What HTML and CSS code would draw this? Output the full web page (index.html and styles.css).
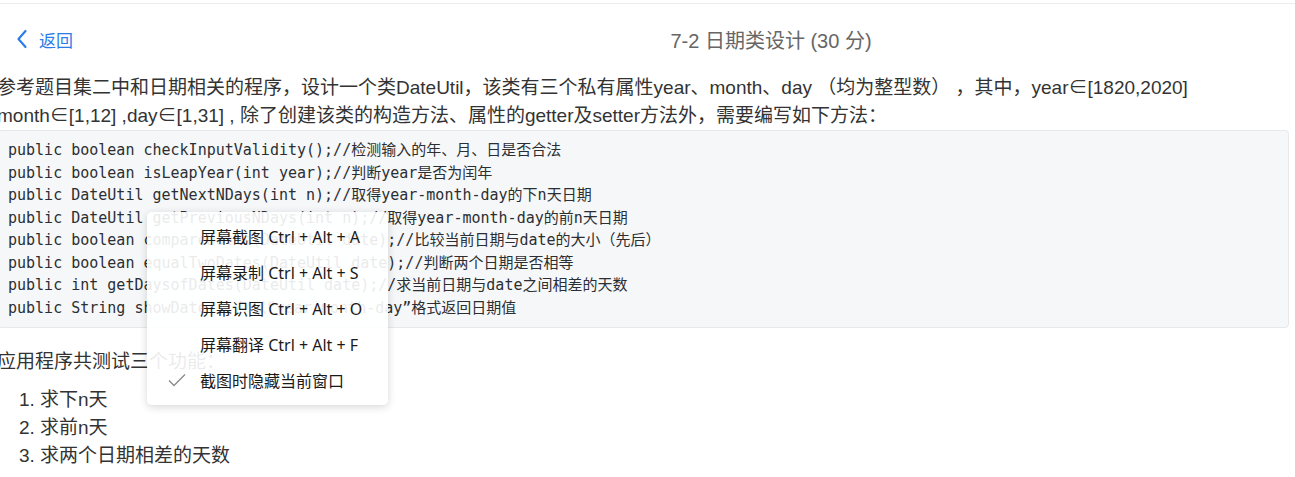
FILE: index.html
```html
<!DOCTYPE html>
<html lang="zh-CN">
<head>
<meta charset="utf-8">
<title>7-2 日期类设计</title>
<link rel="stylesheet" href="styles.css">
</head>
<body>
<div class="topline"></div>
<header class="bar">
  <a class="back" href="#">
    <svg class="chev" width="12" height="20" viewBox="0 0 12 20"><path d="M9.5 2 L2.5 10 L9.5 18" fill="none" stroke="currentColor" stroke-width="2.2" stroke-linecap="round" stroke-linejoin="round"/></svg>
    <span>返回</span>
  </a>
  <h1 class="title">7-2 日期类设计 (30 分)</h1>
</header>
<main class="content">
  <p class="desc"><span class="ln">参考题目集二中和日期相关的程序，设计一个类DateUtil，该类有三个私有属性year、month、day （均为整型数） ，其中，year∈[1820,2020]</span><br><span class="ln">month∈[1,12] ,day∈[1,31] , 除了创建该类的构造方法、属性的getter及setter方法外，需要编写如下方法：</span></p>
  <pre class="code">public boolean checkInputValidity();//检测输入的年、月、日是否合法
public boolean isLeapYear(int year);//判断year是否为闰年
public DateUtil getNextNDays(int n);//取得year-month-day的下n天日期
public DateUtil getPreviousNDays(int n);//取得year-month-day的前n天日期
public boolean compareDates(DateUtil date);//比较当前日期与date的大小（先后）
public boolean equalTwoDates(DateUtil date);//判断两个日期是否相等
public int getDaysofDates(DateUtil date);//求当前日期与date之间相差的天数
public String showDate();//以“year-month-day”格式返回日期值</pre>
  <p class="intro">应用程序共测试三个功能：</p>
  <ol class="list">
    <li>求下n天</li>
    <li>求前n天</li>
    <li>求两个日期相差的天数</li>
  </ol>
</main>
<div class="menu">
  <div class="item"><span class="ico"></span>屏幕截图 Ctrl + Alt + A</div>
  <div class="item"><span class="ico"></span>屏幕录制 Ctrl + Alt + S</div>
  <div class="item"><span class="ico"></span>屏幕识图 Ctrl + Alt + O</div>
  <div class="item"><span class="ico"></span>屏幕翻译 Ctrl + Alt + F</div>
  <div class="item"><span class="ico"><svg width="18" height="14" viewBox="0 0 18 14"><path d="M1 7.5 L6 12.5 L17 1.5" fill="none" stroke="#8a8a8a" stroke-width="1.3"/></svg></span>截图时隐藏当前窗口</div>
</div>
</body>
</html>
```
FILE: styles.css
```css
html, body {
  margin: 0;
  padding: 0;
  background: #fff;
  overflow: hidden;
}
body {
  width: 1295px;
  height: 477px;
  font-family: "Liberation Sans", "Noto Sans CJK SC", sans-serif;
  color: #333;
}
.topline {
  height: 3px;
  border-bottom: 1px solid #ececec;
}
.bar {
  display: flex;
  align-items: center;
  height: 70px;
}
.back {
  width: 247px;
  box-sizing: border-box;
  padding-left: 16px;
  display: flex;
  align-items: center;
  gap: 11px;
  color: #2b7ce9;
  text-decoration: none;
  font-size: 17px;
  font-family: "Noto Sans CJK SC", sans-serif;
}
.chev { display: block; }
.title {
  flex: 1;
  margin: 0;
  padding-top: 1px;
  text-align: center;
  font-weight: normal;
  font-size: 20px;
  color: #666;
  font-family: "Liberation Sans", "Noto Sans CJK SC", sans-serif;
}
.content {
  margin-left: -3px;
  width: 1292px;
}
.desc {
  margin: 0;
  font-size: 19px;
  line-height: 28px;
}
.ln { white-space: pre; }
.code {
  margin: 0;
  background: #f6f7f9;
  border: 1px solid #e6e8eb;
  border-radius: 4px;
  padding: 8px 10px 8px 10px;
  font-family: "DejaVu Sans Mono", "Noto Sans CJK SC", monospace;
  font-size: 15px;
  line-height: 22.5px;
  color: #2b2f33;
}
.intro {
  margin: 20px 0 0 0;
  font-size: 19px;
  line-height: 28px;
}
.list {
  margin: 10px 0 0 0;
  padding-left: 43px;
  font-size: 19px;
  line-height: 28px;
}
.menu {
  position: absolute;
  left: 147px;
  top: 212px;
  width: 241px;
  box-sizing: border-box;
  padding: 6px 0 7px 0;
  background: rgba(255, 255, 255, 0.9);
  border-radius: 5px;
  box-shadow: 0 2px 8px rgba(0, 0, 0, 0.16);
  font-family: "Noto Sans", "Noto Sans CJK SC", sans-serif;
  font-size: 16px;
  color: #1a1a1a;
}
.item {
  height: 36px;
  display: flex;
  align-items: center;
  white-space: nowrap;
}
.ico {
  width: 53px;
  box-sizing: border-box;
  padding-left: 21px;
  display: flex;
  align-items: center;
}
```
